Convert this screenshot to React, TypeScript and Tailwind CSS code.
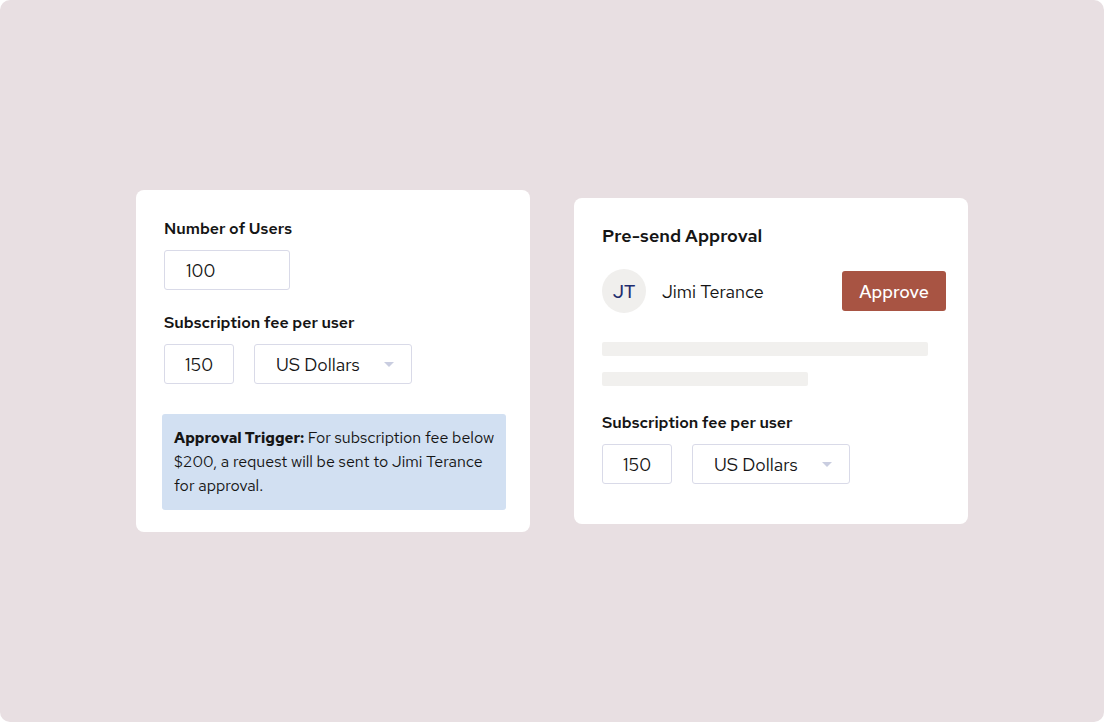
import React from "react";

const font = { fontFamily: '"Red Hat Text", Inter, "Noto Sans", sans-serif' };

function Caret() {
  return (
    <svg width="10" height="5" viewBox="0 0 10 5" className="block">
      <path d="M0 0 L10 0 L5 5 Z" fill="#c9cde0" />
    </svg>
  );
}

function FeeRow() {
  return (
    <div className="flex gap-5">
      <div className="w-[70px] h-10 border border-[#d9dae8] rounded-[3px] flex items-center justify-center text-[18px] text-[#151515]">
        150
      </div>
      <div className="w-[158px] h-10 border border-[#d9dae8] rounded-[3px] flex items-center pl-[21px] pr-[17px] text-[18px] text-[#151515]">
        <span className="flex-1">US Dollars</span>
        <Caret />
      </div>
    </div>
  );
}

export default function App() {
  return (
    <div className="w-[1104px] h-[722px] bg-white" style={font}>
      <div className="w-full h-full bg-[#e8dfe2] rounded-[10px] flex items-center justify-center gap-[44px]">
        <div className="w-[394px] h-[342px] bg-white rounded-[8px] pt-[29px] pl-[28px] pr-[24px]">
          <div className="text-[16px] font-semibold text-[#151515] leading-[20px]">Number of Users</div>
          <div className="mt-[11px] w-[126px] h-10 border border-[#d9dae8] rounded-[3px] flex items-center pl-[21px] text-[18px] text-[#151515]">
            100
          </div>
          <div className="mt-[23px] text-[16px] font-semibold text-[#151515] leading-[20px]">Subscription fee per user</div>
          <div className="mt-[11px]">
            <FeeRow />
          </div>
          <div className="mt-[30px] -ml-[2px] w-[344px] h-[96px] bg-[#d2e0f2] rounded-[3px] pl-[12px] pr-[4px] pt-[12px] text-[16px] leading-[24px] text-[#151515]">
            <span className="font-bold text-[15px]">Approval Trigger:</span> For subscription fee below $200, a request will be sent to Jimi Terance for approval.
          </div>
        </div>
        <div className="w-[394px] h-[326px] bg-white rounded-[8px] pt-[27px] pl-[28px] pr-[22px]">
          <div className="text-[18px] font-semibold text-[#151515] leading-[22px]">Pre-send Approval</div>
          <div className="mt-[22px] flex items-center">
            <div className="w-[44px] h-[44px] rounded-full bg-[#f0efed] flex items-center justify-center text-[18px] font-medium text-[#1f2d6e]">
              JT
            </div>
            <div className="ml-4 text-[18px] text-[#151515] flex-1">Jimi Terance</div>
            <div className="w-[104px] h-10 bg-[#a85443] rounded-[3px] flex items-center justify-center text-white text-[18px] font-medium">
              Approve
            </div>
          </div>
          <div className="mt-[29px] w-[326px] h-[14px] bg-[#f1f0ee] rounded-[2px]" />
          <div className="mt-[16px] w-[206px] h-[14px] bg-[#f1f0ee] rounded-[2px]" />
          <div className="mt-[27px] text-[16px] font-semibold text-[#151515] leading-[20px]">Subscription fee per user</div>
          <div className="mt-[11px]">
            <FeeRow />
          </div>
        </div>
      </div>
    </div>
  );
}
